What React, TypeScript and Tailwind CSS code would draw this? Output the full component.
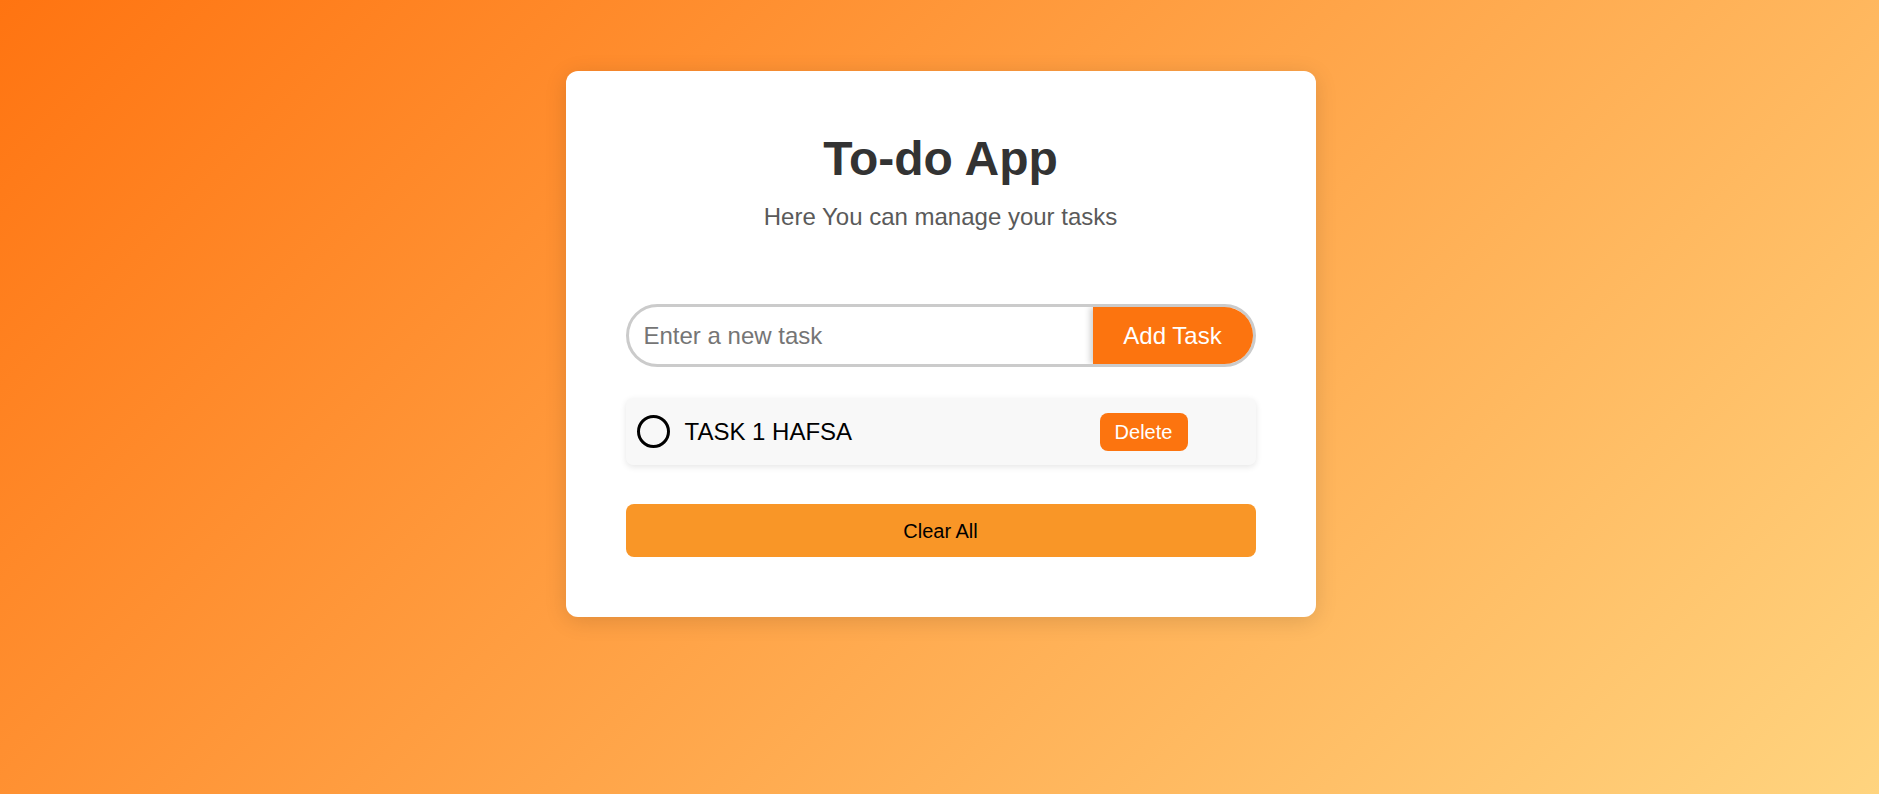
import React, { useState } from 'react';

interface Task {
  id: number;
  text: string;
  done: boolean;
}

export default function App() {
  const [tasks, setTasks] = useState<Task[]>([{ id: 1, text: 'TASK 1 HAFSA', done: false }]);
  const [value, setValue] = useState('');

  const addTask = () => {
    if (!value.trim()) return;
    setTasks(t => [...t, { id: Date.now(), text: value.trim(), done: false }]);
    setValue('');
  };

  return (
    <div className="min-h-screen w-full bg-[linear-gradient(135deg,#ff7411,#ffd47f)] pt-[71px] font-['Liberation_Sans',Arial,sans-serif]">
      <div className="mx-auto w-[750px] translate-x-[1px] rounded-[12px] bg-white p-[60px] shadow-[0_4px_22px_rgba(0,0,0,0.13)]">
        <h1 className="text-center text-[48px] font-bold leading-[55px] text-[#333]">To-do App</h1>
        <p className="mt-[17px] text-center text-[24px] leading-[28px] text-[#5a5a5a]">Here You can manage your tasks</p>

        {/* input row */}
        <div className="mt-[73px] flex h-[63px] overflow-hidden rounded-full border-[3px] border-[#cbcbcb] bg-white">
          <input
            value={value}
            onChange={e => setValue(e.target.value)}
            placeholder="Enter a new task"
            className="min-w-0 flex-1 bg-transparent pl-[15px] text-[24px] text-[#333] outline-none placeholder:text-[#757575]"
          />
          <button
            onClick={addTask}
            className="w-[160px] bg-[#fc740f] text-[24px] text-white shadow-[-3px_0_6px_rgba(0,0,0,0.18)]"
          >
            Add Task
          </button>
        </div>

        {tasks.map(task => (
          <div
            key={task.id}
            className="mt-[31px] flex h-[67px] items-center rounded-[7px] bg-[#f8f8f8] pl-[11px] shadow-[0_2px_6px_rgba(0,0,0,0.1)]"
          >
            <button
              onClick={() => setTasks(t => t.map(x => (x.id === task.id ? { ...x, done: !x.done } : x)))}
              className="h-[33px] w-[33px] shrink-0 rounded-full border-[3px] border-black"
            />
            <span className={`ml-[15px] text-[24px] text-black ${task.done ? 'line-through' : ''}`}>{task.text}</span>
            <button
              onClick={() => setTasks(t => t.filter(x => x.id !== task.id))}
              className="ml-auto mr-[68px] h-[38px] w-[88px] rounded-[8px] bg-[#fc740f] text-[20px] text-white"
            >
              Delete
            </button>
          </div>
        ))}

        <button
          onClick={() => setTasks([])}
          className="mt-[39px] h-[53px] w-full rounded-[8px] bg-[#f99627] text-[20px] text-black"
        >
          Clear All
        </button>
      </div>
    </div>
  );
}
